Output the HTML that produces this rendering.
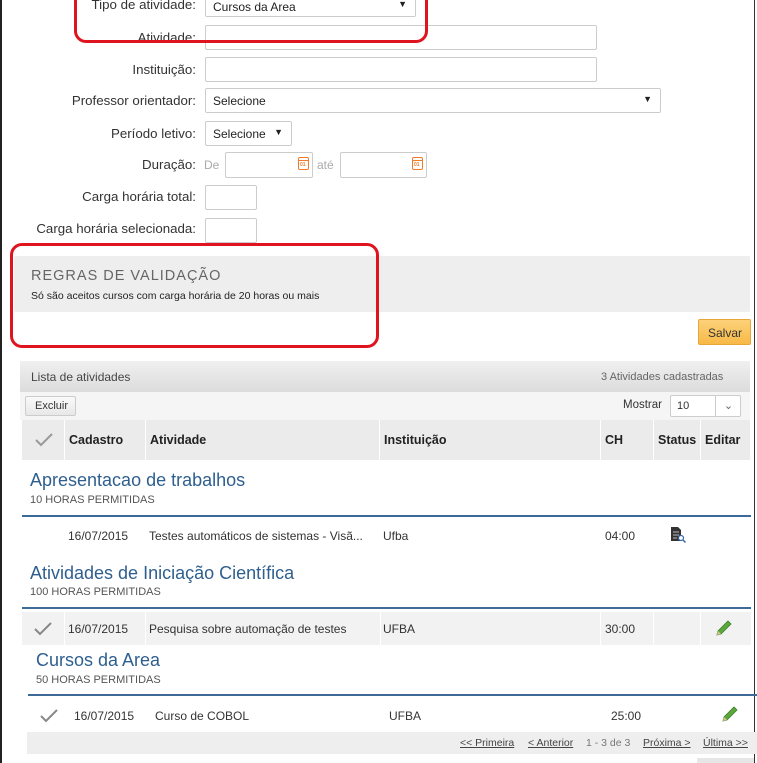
<!DOCTYPE html>
<html><head><meta charset="utf-8"><style>
*{margin:0;padding:0;box-sizing:border-box}
body{width:757px;height:763px;overflow:hidden;background:#fff;font-family:"Liberation Sans",Arial,sans-serif;font-size:12px;color:#333;position:relative}
.a{position:absolute;white-space:nowrap}
.lbl{position:absolute;right:561px;font-size:13.3px;color:#333}
.inp{position:absolute;border:1px solid #ccc;border-radius:2px;background:#fff}
.sel{position:absolute;border:1px solid #ccc;border-radius:2px;background:#fff;font-size:12px;color:#222;padding:5px 0 0 7px}
.sel .ar{position:absolute;right:8px;top:3px;font-size:9px}
.cal{position:absolute;right:3px;top:4px;width:11px;height:13px;border:1.5px solid #f07a2a;border-radius:2px}
.cal:before{content:"";position:absolute;left:0;right:0;top:2px;border-top:1.5px solid #f07a2a}
.cal:after{content:"01";position:absolute;left:1px;top:4px;font-size:5px;color:#f07a2a;font-weight:bold}
.gt{position:absolute;font-size:18px;color:#2e5f8f}
.gs{position:absolute;font-size:11px;color:#555}
.bl{position:absolute;height:2px;background:#3d6a98}
.cell{position:absolute;font-size:12px;color:#333}
.hd{position:absolute;top:420px;height:40px;background:#ebebeb;font-weight:bold;font-size:12.5px;color:#222;padding:13px 0 0 4px}
.pg{position:absolute;top:737px;font-size:10.5px;color:#444;text-decoration:underline}
</style></head><body>
<div class="a" style="left:0;top:0;width:2px;height:763px;background:#222"></div>
<div class="a" style="left:754px;top:0;width:1px;height:763px;background:#333"></div>

<div class="lbl" style="top:-3px">Tipo de atividade:</div>
<div class="sel" style="left:205px;top:-8px;width:211px;height:25px;padding-top:7px">Cursos da Area<span class="ar" style="top:6px">▼</span></div>
<div class="lbl" style="top:30px">Atividade:</div>
<div class="inp" style="left:205px;top:25px;width:392px;height:25px"></div>
<div class="lbl" style="top:62px">Instituição:</div>
<div class="inp" style="left:205px;top:57px;width:392px;height:25px"></div>
<div class="lbl" style="top:93px">Professor orientador:</div>
<div class="sel" style="left:205px;top:88px;width:456px;height:25px">Selecione<span class="ar" style="top:5px">▼</span></div>
<div class="lbl" style="top:126px">Período letivo:</div>
<div class="sel" style="left:205px;top:121px;width:87px;height:25px">Selecione<span class="ar" style="top:5px">▼</span></div>
<div class="lbl" style="top:157px">Duração:</div>
<div class="a" style="left:204px;top:158px;color:#aaa;font-size:12px">De</div>
<div class="inp" style="left:225px;top:152px;width:88px;height:26px"><div class="cal"></div></div>
<div class="a" style="left:317px;top:158px;color:#aaa;font-size:12px">até</div>
<div class="inp" style="left:340px;top:152px;width:87px;height:26px"><div class="cal"></div></div>
<div class="lbl" style="top:189px">Carga horária total:</div>
<div class="inp" style="left:205px;top:185px;width:52px;height:25px"></div>
<div class="lbl" style="top:221px">Carga horária selecionada:</div>
<div class="inp" style="left:205px;top:218px;width:52px;height:25px"></div>

<div class="a" style="left:74px;top:-12px;width:354px;height:55px;border:3px solid #e0141e;border-radius:12px"></div>

<div class="a" style="left:14px;top:256px;width:736px;height:56px;background:#eeeeee;border-radius:2px"></div>
<div class="a" style="left:31px;top:268px;font-size:14.5px;letter-spacing:1px;color:#666">REGRAS DE VALIDAÇÃO</div>
<div class="a" style="left:31px;top:290px;font-size:10.5px;color:#222">Só são aceitos cursos com carga horária de 20 horas ou mais</div>
<div class="a" style="left:10px;top:243px;width:369px;height:105px;border:3px solid #e0141e;border-radius:12px"></div>

<div class="a" style="left:698px;top:319px;width:53px;height:26px;background:linear-gradient(#fcd27a,#f7b947);border:1px solid #e8a63a;border-radius:2px;font-size:12px;color:#333;padding:6px 0 0 9px">Salvar</div>

<div class="a" style="left:20px;top:361px;width:730px;height:31px;background:linear-gradient(#f0f0f0,#dcdcdc)"></div>
<div class="a" style="left:31px;top:370px;font-size:12px;color:#444">Lista de atividades</div>
<div class="a" style="left:601px;top:371px;font-size:11px;color:#666">3 Atividades cadastradas</div>
<div class="a" style="left:20px;top:392px;width:730px;height:28px;background:#f5f5f5"></div>
<div class="a" style="left:25px;top:396px;width:51px;height:20px;border:1px solid #ccc;border-radius:2px;background:linear-gradient(#fafafa,#e8e8e8);font-size:11px;color:#333;padding:3px 0 0 9px">Excluir</div>
<div class="a" style="left:623px;top:399px;font-size:11.5px;color:#333">Mostrar</div>
<div class="a" style="left:670px;top:395px;width:71px;height:22px;border:1px solid #ccc;border-radius:2px;background:#fff;font-size:11px;padding:4px 0 0 6px">10<span style="position:absolute;left:44px;top:0;height:20px;border-left:1px solid #ccc;width:26px;text-align:center;color:#666;padding-top:3px">⌄</span></div>

<div class="hd" style="left:22px;width:42px;padding:0"><svg style="position:absolute;left:13px;top:13px" width="18" height="14" viewBox="0 0 18 14"><path d="M1 7l5 5L17 1" fill="none" stroke="#999" stroke-width="2"/></svg></div>
<div class="hd" style="left:65px;width:80px">Cadastro</div>
<div class="hd" style="left:146px;width:233px">Atividade</div>
<div class="hd" style="left:380px;width:220px">Instituição</div>
<div class="hd" style="left:601px;width:52px">CH</div>
<div class="hd" style="left:654px;width:46px">Status</div>
<div class="hd" style="left:701px;width:49px">Editar</div>

<div class="gt" style="left:30px;top:470px">Apresentacao de trabalhos</div>
<div class="gs" style="left:30px;top:494px">10 HORAS PERMITIDAS</div>
<div class="bl" style="left:22px;top:515px;width:729px"></div>
<div class="cell" style="left:68px;top:529px">16/07/2015</div>
<div class="cell" style="left:149px;top:529px">Testes automáticos de sistemas - Visã...</div>
<div class="cell" style="left:383px;top:529px">Ufba</div>
<div class="cell" style="left:605px;top:529px">04:00</div>
<svg class="a" style="left:669px;top:526px" width="18" height="17" viewBox="0 0 18 17"><path d="M2 1h7l3 3v11H2z" fill="#333"/><path d="M4 6h6M4 9h6M4 12h4" stroke="#bbb" stroke-width="1"/><circle cx="12" cy="12" r="2.5" fill="#fff" stroke="#3a6aa8" stroke-width="1.2"/><path d="M14 14l2.5 2.5" stroke="#3a6aa8" stroke-width="1.5"/></svg>

<div class="gt" style="left:30px;top:563px">Atividades de Iniciação Científica</div>
<div class="gs" style="left:30px;top:586px">100 HORAS PERMITIDAS</div>
<div class="bl" style="left:22px;top:607px;width:729px"></div>
<div class="a" style="left:22px;top:612px;width:729px;height:33px;background:#f2f2f2"></div>
<div class="a" style="left:64px;top:612px;width:1px;height:33px;background:#fff"></div>
<div class="a" style="left:145px;top:612px;width:1px;height:33px;background:#fff"></div>
<div class="a" style="left:380px;top:612px;width:1px;height:33px;background:#fff"></div>
<div class="a" style="left:600px;top:612px;width:1px;height:33px;background:#fff"></div>
<div class="a" style="left:653px;top:612px;width:1px;height:33px;background:#fff"></div>
<div class="a" style="left:700px;top:612px;width:1px;height:33px;background:#fff"></div>
<svg class="a" style="left:34px;top:622px" width="18" height="14" viewBox="0 0 18 14"><path d="M1 7l5 5L17 1" fill="none" stroke="#888" stroke-width="2"/></svg>
<div class="cell" style="left:68px;top:622px">16/07/2015</div>
<div class="cell" style="left:149px;top:622px">Pesquisa sobre automação de testes</div>
<div class="cell" style="left:383px;top:622px">UFBA</div>
<div class="cell" style="left:605px;top:622px">30:00</div>
<svg class="a" style="left:715px;top:619px" width="18" height="18" viewBox="0 0 18 18"><path d="M2 16l1-4L13 2l3 3L6 15z" fill="#5aa83c" stroke="#3d7f2a" stroke-width="0.8"/><path d="M2 16l1-4 3 3z" fill="#d8c890"/></svg>

<div class="gt" style="left:36px;top:650px">Cursos da Area</div>
<div class="gs" style="left:36px;top:674px">50 HORAS PERMITIDAS</div>
<div class="bl" style="left:28px;top:694px;width:729px"></div>
<svg class="a" style="left:40px;top:709px" width="18" height="14" viewBox="0 0 18 14"><path d="M1 7l5 5L17 1" fill="none" stroke="#888" stroke-width="2"/></svg>
<div class="cell" style="left:74px;top:709px">16/07/2015</div>
<div class="cell" style="left:155px;top:709px">Curso de COBOL</div>
<div class="cell" style="left:389px;top:709px">UFBA</div>
<div class="cell" style="left:611px;top:709px">25:00</div>
<svg class="a" style="left:721px;top:705px" width="18" height="18" viewBox="0 0 18 18"><path d="M2 16l1-4L13 2l3 3L6 15z" fill="#5aa83c" stroke="#3d7f2a" stroke-width="0.8"/><path d="M2 16l1-4 3 3z" fill="#d8c890"/></svg>

<div class="a" style="left:27px;top:732px;width:730px;height:22px;background:#eeeeee"></div>
<div class="pg" style="left:460px">&lt;&lt; Primeira</div>
<div class="pg" style="left:528px">&lt; Anterior</div>
<div class="pg" style="left:586px;text-decoration:none;color:#777">1 - 3 de 3</div>
<div class="pg" style="left:643px">Próxima &gt;</div>
<div class="pg" style="left:703px">Última &gt;&gt;</div>
<div class="a" style="left:697px;top:758px;width:57px;height:5px;background:#e6e6e6"></div>
</body></html>
